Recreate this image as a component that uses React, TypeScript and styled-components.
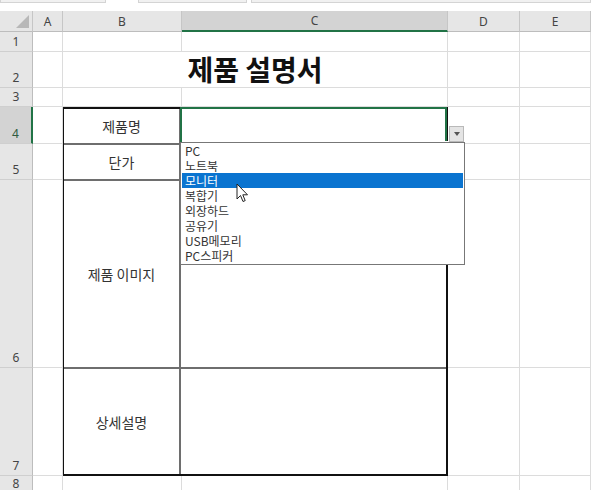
import React from 'react';
import styled, { createGlobalStyle } from 'styled-components';

const GlobalStyle = createGlobalStyle`
  html, body {
    margin: 0;
    padding: 0;
    background: #ffffff;
  }
  body {
    font-family: "Noto Sans", "Noto Sans CJK KR", sans-serif;
  }
  * {
    box-sizing: border-box;
  }
`;

const Page = styled.div`
  width: 591px;
  height: 490px;
  overflow: hidden;
  background: #ffffff;
`;

const TopStrip = styled.div`
  height: 11px;
  display: flex;
  gap: 4px;
  align-items: flex-start;
  background: #ffffff;
`;

const StripBox = styled.div<{ $w: number }>`
  width: ${(p) => p.$w}px;
  height: 3px;
  background: #f1f1f1;
  border: 1px solid #d4d4d4;
  border-top: none;
`;

const StripGap = styled.div`
  width: 25px;
`;

const Sheet = styled.div`
  display: grid;
  grid-template-columns: 33px 30px 119px 266px 72px 1fr;
  grid-template-rows: 21px 20px 36px 19px 37px 36px 188px 108px 1fr;
  height: 479px;
`;

const Corner = styled.div`
  position: relative;
  background: #e6e6e6;
  border-right: 1px solid #c6c6c6;
  border-bottom: 1px solid #bdbdbd;

  &::after {
    content: '';
    position: absolute;
    right: 3px;
    bottom: 3px;
    width: 0;
    height: 0;
    border-left: 13px solid transparent;
    border-bottom: 13px solid #b8b8b8;
  }
`;

const ColHead = styled.div<{ $active?: boolean }>`
  display: flex;
  align-items: center;
  justify-content: center;
  font-size: 12px;
  color: #444;
  background: ${(p) => (p.$active ? '#d3d3d3' : '#e6e6e6')};
  border-right: 1px solid #c6c6c6;
  border-bottom: ${(p) => (p.$active ? '2px solid #217346' : '1px solid #bdbdbd')};
`;

const RowHead = styled.div<{ $active?: boolean }>`
  display: flex;
  align-items: flex-end;
  justify-content: center;
  padding-bottom: 1px;
  font-size: 12px;
  line-height: 16px;
  color: ${(p) => (p.$active ? '#2f5b3f' : '#444')};
  background: ${(p) => (p.$active ? '#d3d3d3' : '#e6e6e6')};
  border-bottom: 1px solid #cfcfcf;
  border-right: ${(p) => (p.$active ? '2px solid #217346' : '1px solid #bdbdbd')};
`;

const Cell = styled.div`
  border-right: 1px solid #dcdcdc;
  border-bottom: 1px solid #dcdcdc;
`;

const TitleCell = styled.div`
  grid-column: 3 / 5;
  display: flex;
  align-items: flex-end;
  justify-content: center;
  border-right: 1px solid #dcdcdc;
  border-bottom: 1px solid #dcdcdc;
  font-family: "Noto Sans CJK KR", sans-serif;
  font-weight: 700;
  font-size: 28px;
  line-height: 35px;
  color: #111;
`;

const TableBox = styled.div`
  grid-column: 3 / 5;
  grid-row: 5 / 9;
  display: grid;
  grid-template-columns: 117px 1fr;
  grid-template-rows: 36px 36px 188px 1fr;
  border: 2px solid #111;
  margin-left: -1px;
  background: #fff;
`;

const Label = styled.div<{ $last?: boolean }>`
  display: flex;
  align-items: center;
  justify-content: center;
  font-family: "Noto Sans CJK KR", sans-serif;
  font-size: 14px;
  color: #333;
  border-right: 2px solid #6e6e6e;
  border-bottom: ${(p) => (p.$last ? 'none' : '2px solid #6e6e6e')};
`;

const Value = styled.div<{ $last?: boolean }>`
  position: relative;
  border-bottom: ${(p) => (p.$last ? 'none' : '2px solid #6e6e6e')};
`;

const Selected = styled(Value)`
  &::before {
    content: '';
    position: absolute;
    top: -2px;
    left: -1px;
    right: -1px;
    bottom: -1px;
    border: 2px solid #217346;
    pointer-events: none;
  }
`;

const FillHandle = styled.div`
  position: absolute;
  right: -3px;
  bottom: -3px;
  width: 6px;
  height: 5px;
  background: #1e3a28;
  border: 1px solid #fff;
  z-index: 3;
`;

const DropButton = styled.div`
  position: absolute;
  left: calc(100% + 3px);
  bottom: 1px;
  width: 15px;
  height: 16px;
  background: #e4e4e4;
  border: 1px solid #b9b9b9;
  display: flex;
  align-items: center;
  justify-content: center;
  z-index: 3;
`;

const Caret = styled.div`
  width: 0;
  height: 0;
  border-left: 3.5px solid transparent;
  border-right: 3.5px solid transparent;
  border-top: 4px solid #555;
`;

const DropList = styled.ul`
  position: absolute;
  top: calc(100% - 1px);
  left: -1px;
  width: 285px;
  height: 123px;
  margin: 0;
  padding: 0;
  list-style: none;
  background: #fff;
  border: 1px solid #777;
  z-index: 4;
`;

const Item = styled.li<{ $active?: boolean }>`
  height: 15px;
  line-height: 15px;
  padding-left: 3px;
  margin: 0 1px;
  font-family: "Noto Sans CJK KR", sans-serif;
  font-size: 12px;
  color: ${(p) => (p.$active ? '#fff' : '#333')};
  background: ${(p) => (p.$active ? '#0a74d0' : 'transparent')};
  white-space: nowrap;
`;

const Pointer = styled.svg`
  position: absolute;
  left: 55px;
  top: 40px;
  z-index: 5;
`;

const columns = ['A', 'B', 'C', 'D', 'E'];
const products = ['PC', '노트북', '모니터', '복합기', '외장하드', '공유기', 'USB메모리', 'PC스피커'];

const BlankRow: React.FC<{ n: number }> = ({ n }) => (
  <>
    <RowHead>{n}</RowHead>
    {columns.map((c) => (
      <Cell key={c} />
    ))}
  </>
);

const App: React.FC = () => {
  return (
    <Page>
      <GlobalStyle />
      <TopStrip>
        <StripBox $w={107} />
        <StripGap />
        <StripBox $w={110} />
        <StripBox $w={345} />
      </TopStrip>
      <Sheet>
        <Corner />
        {columns.map((c) => (
          <ColHead key={c} $active={c === 'C'}>
            {c}
          </ColHead>
        ))}

        <BlankRow n={1} />

        <RowHead>2</RowHead>
        <Cell />
        <TitleCell>제품 설명서</TitleCell>
        <Cell />
        <Cell />

        <BlankRow n={3} />

        <TableBox>
          <Label>제품명</Label>
          <Selected>
            <FillHandle />
            <DropButton>
              <Caret />
            </DropButton>
            <DropList>
              {products.map((p) => (
                <Item key={p} $active={p === '모니터'}>
                  {p}
                </Item>
              ))}
              <Pointer width="13" height="21" viewBox="0 0 13 21">
                <path
                  d="M1 1 L1 16 L4.5 12.5 L7 18.5 L9.2 17.6 L6.8 11.8 L11.5 11.8 Z"
                  fill="#fff"
                  stroke="#222"
                  strokeWidth="1"
                  strokeLinejoin="round"
                />
              </Pointer>
            </DropList>
          </Selected>
          <Label>단가</Label>
          <Value />
          <Label>제품 이미지</Label>
          <Value />
          <Label $last>상세설명</Label>
          <Value $last />
        </TableBox>

        {[4, 5, 6, 7].map((n) => (
          <React.Fragment key={n}>
            <RowHead $active={n === 4}>{n}</RowHead>
            <Cell />
            <Cell />
            <Cell />
          </React.Fragment>
        ))}

        <BlankRow n={8} />
      </Sheet>
    </Page>
  );
};

export default App;
